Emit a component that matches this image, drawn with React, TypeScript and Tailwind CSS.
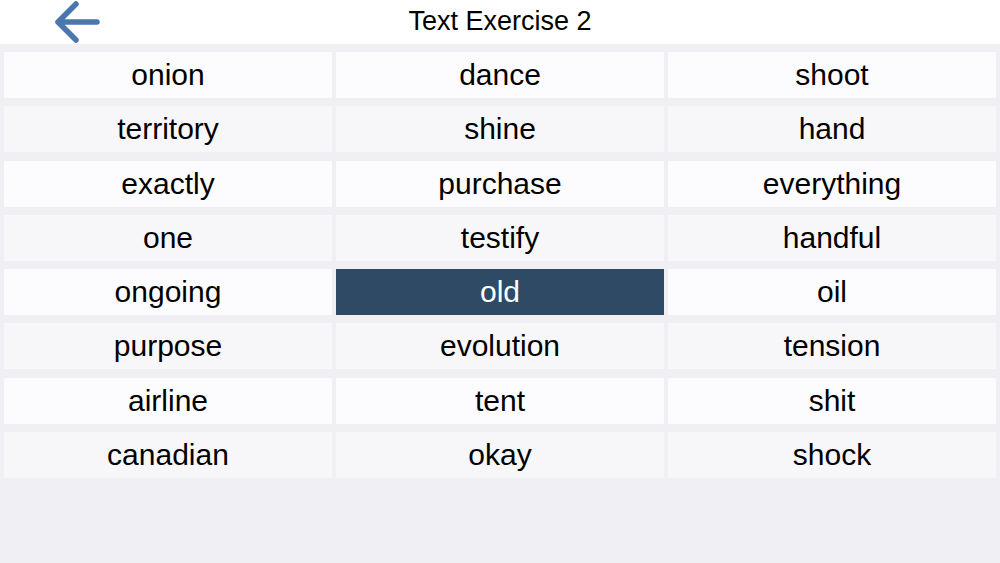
import React, { useState } from 'react';

const WORDS = [
  ['onion', 'dance', 'shoot'],
  ['territory', 'shine', 'hand'],
  ['exactly', 'purchase', 'everything'],
  ['one', 'testify', 'handful'],
  ['ongoing', 'old', 'oil'],
  ['purpose', 'evolution', 'tension'],
  ['airline', 'tent', 'shit'],
  ['canadian', 'okay', 'shock'],
];

const App: React.FC = () => {
  const [selected, setSelected] = useState('old');

  return (
    <div className="w-[1000px] h-[563px] bg-[#efeff4] flex flex-col" style={{ fontFamily: '"Liberation Sans", Arial, sans-serif' }}>
      <div className="h-[44px] bg-white flex items-center relative">
        <button className="absolute left-[52px] top-0 w-[50px] h-[44px] text-[#4a78ad]">
          <svg width="50" height="44" viewBox="0 0 50 44" fill="none" stroke="currentColor" strokeWidth={5.5} strokeLinecap="round" strokeLinejoin="round">
            <path d="M45 22H6M24 4L6 22l18 18" />
          </svg>
        </button>
        <h1 className="flex-1 text-center text-[27px] leading-none text-black pb-[1px]">Text Exercise 2</h1>
      </div>

      <div className="grid grid-cols-3 gap-x-[4px] gap-y-[8.25px] px-[4px] pt-[8px]">
        {WORDS.map((row, i) =>
          row.map((w) => (
            <button
              key={w}
              onClick={() => setSelected(w)}
              className={`h-[46px] flex items-center justify-center text-[30px] leading-none ${
                selected === w
                  ? 'bg-[#2f4a65] text-white'
                  : i % 2 === 0
                  ? 'bg-[#fcfcfe] text-black'
                  : 'bg-[#f7f7fa] text-black'
              }`}
            >
              {w}
            </button>
          ))
        )}
      </div>
    </div>
  );
};

export default App;
